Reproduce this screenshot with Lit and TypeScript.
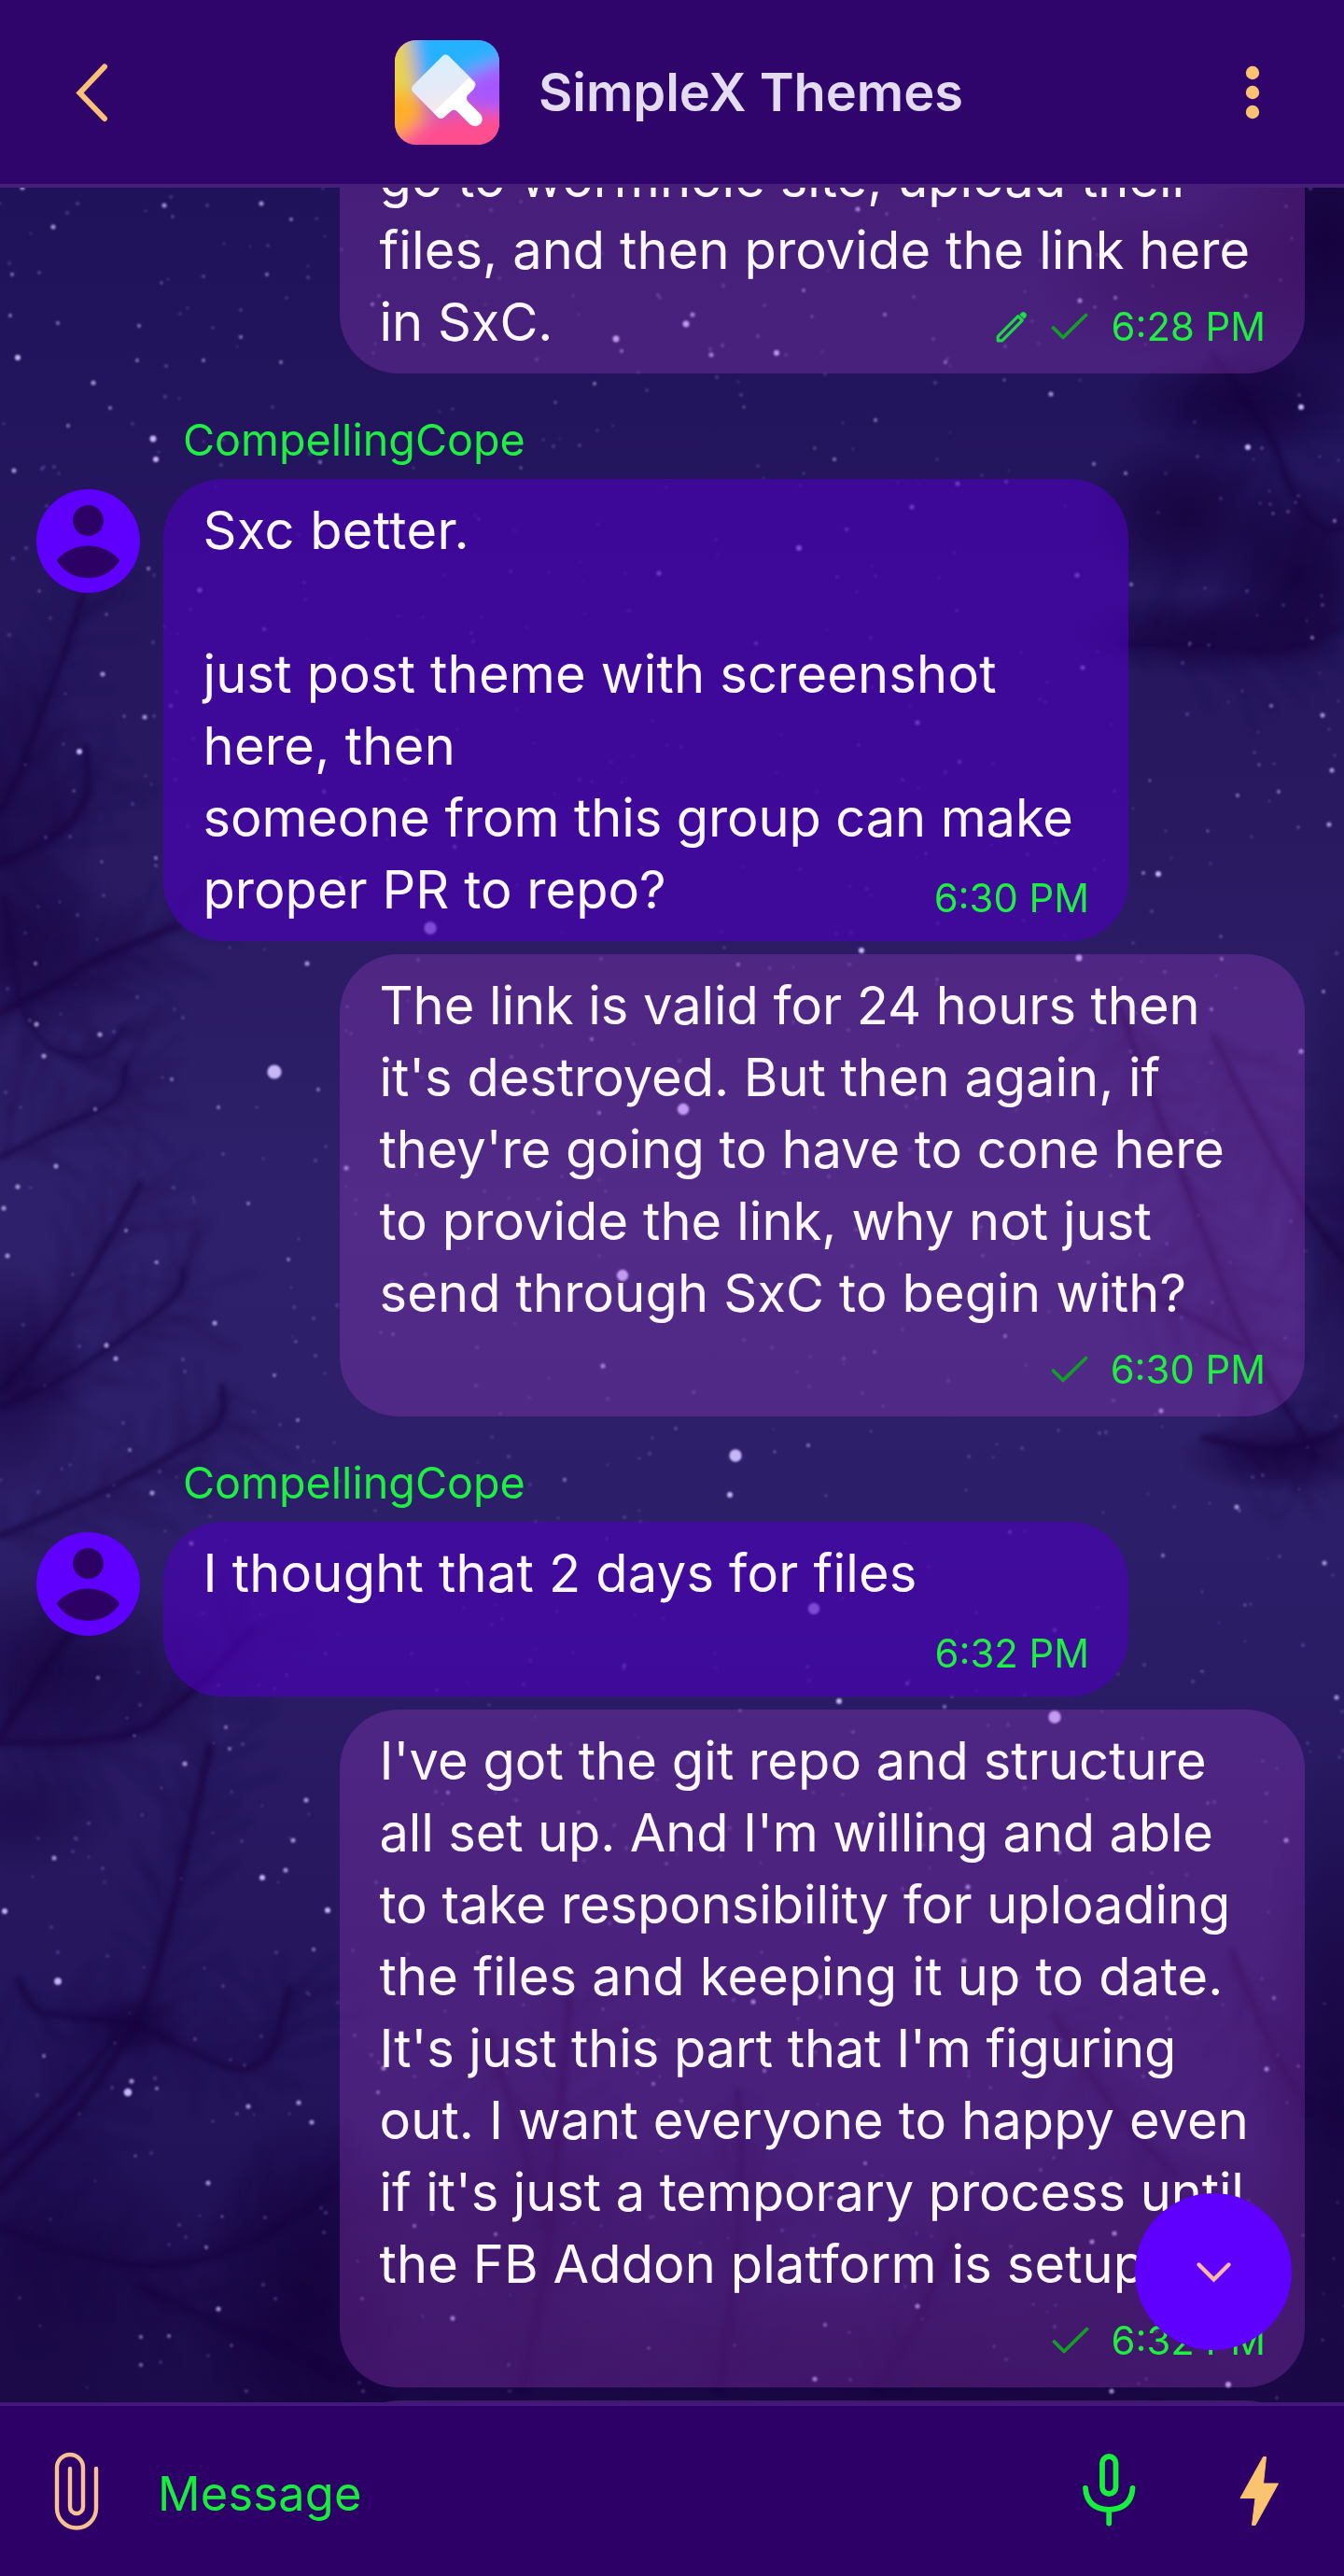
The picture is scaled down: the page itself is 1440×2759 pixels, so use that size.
import { LitElement, html, svg, css } from "lit";
import { customElement, property } from "lit/decorators.js";
import { styleMap } from "lit/directives/style-map.js";

type Point = [number, number];
type Star = [number, number, number];
/* A line of text and its tracking in pixels. */
type Line = [string, number];

interface Message {
  own: boolean;
  author?: string;
  lines: Line[];
  time: string;
  edited?: boolean;
  metaBelow?: boolean;
}

const MESSAGES: Message[] = [
  {
    own: true,
    lines: [
      ["go to wormhole site, upload their", 0.02],
      ["files, and then provide the link here", 0.1],
      ["in SxC.", 0],
    ],
    time: "6:28 PM",
    edited: true,
  },
  {
    own: false,
    author: "CompellingCope",
    lines: [
      ["Sxc better.", 0.42],
      ["", 0],
      ["just post theme with screenshot", 0.18],
      ["here, then", 0.3],
      ["someone from this group can make", -0.12],
      ["proper PR to repo?", 0.03],
    ],
    time: "6:30 PM",
  },
  {
    own: true,
    lines: [
      ["The link is valid for 24 hours then", -0.06],
      ["it's destroyed. But then again, if", -0.02],
      ["they're going to have to cone here", -0.04],
      ["to provide the link, why not just", 0.07],
      ["send through SxC to begin with?", 0.15],
    ],
    time: "6:30 PM",
    metaBelow: true,
  },
  {
    own: false,
    author: "CompellingCope",
    lines: [["I thought that 2 days for files", 0.21]],
    time: "6:32 PM",
    metaBelow: true,
  },
  {
    own: true,
    lines: [
      ["I've got the git repo and structure", 0.07],
      ["all set up. And I'm willing and able", -0.13],
      ["to take responsibility for uploading", -0.07],
      ["the files and keeping it up to date.", 0.22],
      ["It's just this part that I'm figuring", -0.1],
      ["out. I want everyone to happy even", 0.1],
      ["if it's just a temporary process until", -0.09],
      ["the FB Addon platform is setup.", 0.11],
    ],
    time: "6:32 PM",
    metaBelow: true,
  },
];

/* Bright stars of the wallpaper: x, y, size. */
const STARS: Star[] = [
  [24,201,3],[176,220,3],[280,218,3],[57,243,3],[185,232,2],[312,235,2.5],[286,294,2.5],[13,294,2.5],[11,338,2.5],[62,346,2.5],
  [149,349,2.5],[19,383,3.5],[100,410,3],[301,388,2.5],[218,386,2.5],[258,361,2.5],[147,386,2.5],[178,392,2],[218,296,2],[173,303,2],
  [42,292,2],[660,363,4],[666,376,2.5],[399,326,2.5],[637,411,2.5],[705,316,2],[919,224,3],[950,229,2],[861,311,2.5],[735,347,4],
  [742,337,3],[948,337,2.5],[832,378,3.5],[762,380,3],[774,370,2],[812,360,2],[1013,388,2.5],[1157,322,3],[1173,329,2],[1195,319,2.5],
  [870,339,2],[1076,407,2],[164,470,4],[167,492,3.5],[15,504,3],[73,456,2.5],[118,437,2.5],[343,495,2.5],[159,609,2.5],[114,658,2],
  [110,722,3],[155,768,3],[133,767,2],[85,805,3.5],[214,632,3],[326,624,2],[283,674,2.5],[706,614,3],[183,756,2.5],[347,848,2.5],
  [487,907,2.5],[365,940,2],[461,994,7],[109,923,2],[167,919,2.5],[167,927,2],[38,1032,2.5],[329,1032,3],[79,847,2],[42,633,2],
  [558,501,2],[547,612,2],[513,556,2],[595,431,2],[505,678,2],[797,436,2],[938,450,2.5],[1126,422,3],[873,480,2],[894,492,2.5],
  [1394,436,3.5],[1337,479,3.5],[1352,480,2],[1172,497,2.5],[1206,507,2.5],[1026,518,3],[1078,516,2.5],[977,543,3],[907,567,2.5],
  [856,587,3.5],[897,618,2],[1154,616,3],[1025,654,2],[810,689,2.5],[933,683,2],[1160,715,3],[1212,626,2.5],[1275,689,2],
  [1406,683,2.5],[1417,648,2],[1430,558,2.5],[1364,550,2],[1380,548,2],[983,774,3],[920,798,2],[1028,816,2.5],[1013,827,2],[967,835,2],
  [1417,766,3],[1362,756,2.5],[1326,852,2.5],[1370,848,2.5],[1427,825,3],[1349,819,2],[1424,883,3],[1391,886,2],[1294,890,2],
  [1241,936,3.5],[1225,935,2.5],[929,952,2],[992,914,2],[1308,1003,2],[923,1018,3.5],[1156,1026,4],[791,1033,2.5],[1232,836,2],
  [294,1148,8],[732,1188,6.5],[667,1366,6.5],[788,1559,7],[634,1113,2.5],[642,1192,2.5],[1394,1126,3],[1004,1049,2],[234,1186,2.5],
  [266,1289,2.5],[124,1455,3],[230,1417,3],[646,1463,3],[1244,1511,3],[1077,1431,2.5],[1166,1352,2],[913,1356,2],[548,1132,2],
  [1309,1027,2.5],[866,1548,2.5],[830,1555,2],[421,1429,2],[168,1352,2.5],[309,1349,2.5],[1418,1062,2.5],[456,1365,2],[1080,1092,2],
  [1298,1081,2.5],[371,1251,3],[937,1448,2],[724,1530,2],[782,1601,3.5],[605,1585,2.5],[1325,1614,3],[1328,1618,2],[1246,1666,2.5],
  [1419,1674,3],[1082,1641,2.5],[872,1723,6.5],[1130,1746,2.5],[669,1784,2.5],[865,1785,2],[972,1803,2.5],[468,1810,2],[899,1822,3.5],
  [1012,1828,2.5],[1130,1839,7],[793,1832,2],[1432,1818,3],[1288,1790,2],[650,1648,2],[205,1653,3],[349,1771,2],[307,1794,2],
  [480,1920,2.5],[1378,1971,3],[1135,1984,2.5],[1037,2021,3],[1033,2100,3],[914,1855,2],[1294,1931,2],[714,1996,2],[620,1941,2],
  [328,1928,3],[1334,1719,2],[5,2047,3.5],[62,2122,4.5],[58,1990,3],[198,1889,3],[314,1971,3],[281,2011,3.5],[306,2003,3],
  [351,2046,3.5],[336,2088,2.5],[137,2241,5],[141,2229,3],[168,2237,2.5],[266,2256,3],[254,2264,2],[320,2252,3],[334,2273,3],
  [47,2202,2.5],[209,2184,2],[145,2309,2],[223,2338,3],[238,2374,2],[221,2407,2.5],[234,2473,3],[151,2503,2.5],[181,2502,2.5],
  [151,2533,2.5],[248,2512,2],[242,1850,2.5],[246,1873,2.5],[144,1859,2],[105,1797,2.5],[1194,2392,3],[1170,2401,3],[1357,2216,3],
  [1391,2213,2],[927,2317,2.5],[983,2470,3],[884,2490,2.5],[873,2548,3],[1316,2554,3.5],[1191,2561,3],[1365,2140,2.5],[1253,2173,2],
  [890,2354,2.5],[1083,2406,2],[819,2218,2.5],[879,2139,2.5],[1115,2324,2],[807,2144,3],[485,2483,3],[444,2384,2.5],[531,2393,2.5],
  [411,2215,3],[405,2241,2.5],[700,2232,2.5],[695,2515,2],[388,2462,2],[114,1441,3],[8,1345,3],[4,1294,3],[60,1249,3],[19,1271,3],
  [39,1097,3],[107,1108,3],[47,1131,3],[184,1156,2.5],[167,1352,2],[135,1318,2.5],[102,1188,2.5],[163,1599,3],[139,1553,2.5],
  [294,1473,2.5],[319,1521,2.5],[319,1550,2],[341,1167,2.5],[317,1437,2],
];

/* Branch silhouettes: points along each branch, and its thickness. */
const BRANCHES: { pts: Point[]; w: number }[] = [
  { pts: [[88,640],[70,700],[45,760],[25,820],[0,870]], w: 6 },
  { pts: [[92,800],[100,850],[65,895],[0,925]], w: 7 },
  { pts: [[190,992],[110,1022],[50,1060],[0,1084]], w: 8 },
  { pts: [[5,960],[13,1010],[17,1060],[28,1095],[60,1130],[110,1135],[132,1100]], w: 4 },
  { pts: [[0,1240],[60,1208],[130,1180],[135,1140]], w: 5 },
  { pts: [[0,1490],[55,1430],[110,1340],[150,1268]], w: 6 },
  { pts: [[0,1508],[60,1482],[130,1435],[195,1385],[196,1360]], w: 5 },
  { pts: [[0,1645],[110,1600],[190,1555],[240,1525],[238,1485]], w: 6 },
  { pts: [[0,1860],[55,1775],[80,1745]], w: 8 },
  { pts: [[0,1866],[130,1870],[200,1820],[270,1745]], w: 7 },
  { pts: [[225,1870],[200,1985],[160,2140],[130,2195],[80,2265],[0,2345]], w: 8 },
  { pts: [[20,2120],[30,2150],[60,2160],[145,2165],[200,2195],[255,2220],[290,2208],[310,2130]], w: 6 },
  { pts: [[0,2310],[60,2260],[125,2180]], w: 6 },
  { pts: [[0,2385],[90,2420],[190,2430],[280,2400],[360,2340]], w: 6 },
  { pts: [[150,2450],[260,2500],[340,2530],[420,2570]], w: 8 },
  { pts: [[1200,1080],[1240,1190],[1290,1320],[1330,1430],[1410,1560]], w: 6 },
  { pts: [[1300,1110],[1350,1210],[1400,1300],[1440,1350]], w: 6 },
  { pts: [[1190,1370],[1270,1405],[1330,1440]], w: 6 },
  { pts: [[1440,1530],[1380,1560],[1290,1540]], w: 7 },
  { pts: [[1300,380],[1368,470],[1378,520],[1415,570],[1440,565]], w: 5 },
  { pts: [[1200,690],[1290,690],[1380,700],[1440,670]], w: 4 },
  { pts: [[610,2140],[600,2260],[590,2400],[560,2560]], w: 8 },
  { pts: [[525,2180],[560,2300],[590,2400]], w: 6 },
  { pts: [[790,2240],[800,2340],[770,2560]], w: 7 },
  { pts: [[1020,2400],[990,2480],[940,2560]], w: 8 },
  { pts: [[1130,2160],[1190,2260],[1260,2330]], w: 7 },
  { pts: [[1320,2090],[1350,2170],[1400,2260]], w: 7 },
];

function random(seed: number): () => number {
  let s = seed;
  return () => {
    s = (s * 1664525 + 1013904223) >>> 0;
    return s / 4294967296;
  };
}

/* Fine needles that fan out from both sides of a branch towards its tip. */
function needles(): string {
  const rnd = random(91);
  let d = "";
  for (const { pts } of BRANCHES) {
    for (let i = 1; i < pts.length; i++) {
      const [ax, ay] = pts[i - 1];
      const [bx, by] = pts[i];
      const length = Math.hypot(bx - ax, by - ay);
      const back = Math.atan2(ay - by, ax - bx) + (bx > ax ? Math.PI : 0);
      for (let t = 0; t < length; t += 4) {
        const x = ax + ((bx - ax) * t) / length;
        const y = ay + ((by - ay) * t) / length;
        const angle = back + (rnd() < 0.5 ? -1 : 1) * (0.2 + rnd() * 1.1);
        const reach = 20 + rnd() * 75;
        d += `M${x.toFixed(0)} ${y.toFixed(0)}l${(Math.cos(angle) * reach).toFixed(0)} ${(Math.sin(angle) * reach).toFixed(0)}`;
      }
    }
  }
  return d;
}

function dust(): Star[] {
  const rnd = random(7);
  return Array.from({ length: 800 }, () => [rnd() * 1440, 200 + rnd() * 2370, 1.1 + rnd() * 1] as Star);
}

const smooth = (pts: Point[]): string => {
  let d = `M${pts[0][0]} ${pts[0][1]}`;
  for (let i = 1; i < pts.length - 1; i++) {
    const [x, y] = pts[i];
    const [nx, ny] = pts[i + 1];
    d += ` Q${x} ${y} ${(x + nx) / 2} ${(y + ny) / 2}`;
  }
  const [ex, ey] = pts[pts.length - 1];
  return `${d} L${ex} ${ey}`;
};

@customElement("night-sky")
class NightSky extends LitElement {
  static styles = css`
    :host {
      display: block;
    }
    .sky {
      display: block;
      width: 1440px;
      height: 2759px;
    }
  `;

  render() {
    const shades: [number, number, number, number, number][] = [
      [1420, 260, 150, 190, 0.9],
      [1270, 300, 160, 90, 0.6],
      [1330, 430, 130, 60, 0.8],
      [1270, 550, 110, 90, 0.8],
      [1390, 620, 90, 110, 0.8],
      [1290, 680, 150, 46, 0.7],
      [0, 900, 110, 230, 0.5],
      [60, 1020, 120, 90, 0.45],
      [10, 1480, 90, 130, 0.6],
      [60, 1790, 180, 110, 0.6],
      [20, 1940, 110, 70, 0.45],
      [145, 2170, 60, 34, 0.65],
      [40, 2440, 180, 170, 0.45],
      [330, 2450, 120, 200, 0.75],
      [470, 2520, 300, 130, 0.35],
      [1440, 1300, 60, 330, 0.5],
      [1370, 1560, 110, 40, 0.7],
      [1430, 2250, 90, 380, 0.75],
      [1000, 2560, 600, 110, 0.6],
      [560, 2380, 260, 110, 0.35],
      [1200, 2420, 260, 130, 0.4],
    ];
    return html`
      <svg class="sky" viewBox="0 0 1440 2759" aria-hidden="true">
        <defs>
          <linearGradient id="air" x1="0" y1="0" x2="0" y2="1">
            <stop offset="0.07" stop-color="#20125a"></stop>
            <stop offset="0.32" stop-color="#281961"></stop>
            <stop offset="0.47" stop-color="#2f206b"></stop>
            <stop offset="0.6" stop-color="#2c1e68"></stop>
            <stop offset="0.74" stop-color="#26175f"></stop>
            <stop offset="0.84" stop-color="#221258"></stop>
            <stop offset="0.935" stop-color="#1c0b4a"></stop>
          </linearGradient>
          <radialGradient id="shade">
            <stop offset="0" stop-color="#14003a"></stop>
            <stop offset="0.5" stop-color="#14003a" stop-opacity="0.6"></stop>
            <stop offset="1" stop-color="#14003a" stop-opacity="0"></stop>
          </radialGradient>
          <filter id="soft" x="-5%" y="-5%" width="110%" height="110%"><feGaussianBlur stdDeviation="2.8"></feGaussianBlur></filter>
          <filter id="softer" x="-5%" y="-5%" width="110%" height="110%"><feGaussianBlur stdDeviation="4.5"></feGaussianBlur></filter>
          <filter id="glow" x="-5%" y="-5%" width="110%" height="110%"><feGaussianBlur stdDeviation="0.8"></feGaussianBlur></filter>
        </defs>
        <rect width="1440" height="2759" fill="url(#air)"></rect>
        ${shades.map(
          ([x, y, rx, ry, o]) => svg`<ellipse cx=${x} cy=${y} rx=${rx} ry=${ry} fill="url(#shade)" opacity=${o}></ellipse>`
        )}
        <path d=${needles()} fill="none" stroke="#15003c" stroke-width="2.2" opacity="0.4" filter="url(#softer)"></path>
        <g fill="none" stroke="#15003c" stroke-linecap="round" opacity="0.55" filter="url(#soft)">
          ${BRANCHES.map((b) => svg`<path d=${smooth(b.pts)} stroke-width=${b.w}></path>`)}
        </g>
        <g fill="#9a86e8" opacity="0.34" filter="url(#glow)">
          ${dust().map(([x, y, r]) => svg`<circle cx=${x.toFixed(0)} cy=${y.toFixed(0)} r=${r.toFixed(1)}></circle>`)}
        </g>
        <g fill="#cfc0ff" filter="url(#glow)">
          ${STARS.map(
            ([x, y, s]) =>
              svg`<circle cx=${x} cy=${y} r=${s > 5 ? s * 0.95 : s * 0.86} opacity=${s > 3.4 ? 0.95 : s > 2.9 ? 0.72 : s > 2.2 ? 0.5 : 0.36}></circle>`
          )}
        </g>
      </svg>
    `;
  }
}

@customElement("chat-bubble")
class ChatBubble extends LitElement {
  @property({ attribute: false }) message!: Message;

  static styles = css`
    :host {
      display: block;
      flex: none;
    }
    .bubble {
      box-sizing: border-box;
      display: grid;
      width: 1034px;
      padding: 17px 42px 16px 42.5px;
      border-radius: 63px;
      background: rgba(78, 0, 190, 0.6);
    }
    .own {
      background: rgba(186, 70, 225, 0.25);
    }
    .text {
      grid-area: 1 / 1;
      font: 400 56px/77px Inter, sans-serif;
      white-space: pre;
      color: #fff9ff;
    }
    .line {
      width: max-content;
      height: 77px;
    }
    .spaced {
      padding-bottom: 77px;
    }
    .meta {
      grid-area: 1 / 1;
      place-self: end;
      display: flex;
      align-items: center;
      height: 50px;
      margin-bottom: 5px;
      font: 400 41.8px/50px Inter, sans-serif;
      color: #1df03f;
    }
    .own .meta {
      margin-bottom: 9px;
    }
    .pencil {
      width: 34px;
      height: 34px;
      margin-right: 25px;
    }
    .check {
      width: 40px;
      height: 30px;
      margin-right: 24px;
    }
  `;

  render() {
    const m = this.message;
    return html`
      <div class="bubble ${m.own ? "own" : ""}">
        <div class="text ${m.metaBelow ? "spaced" : ""}">${m.lines.map(
          ([text, track]) => html`<div class="line" style=${styleMap({ letterSpacing: `${track}px` })}>${text}</div>`
        )}</div>
        <div class="meta">
          ${m.edited
            ? html`<svg class="pencil" viewBox="0 0 34 34" fill="none" stroke="#1fd844" stroke-width="3.200" stroke-linejoin="round">
                <path d="M2.200 31.800v-4.500L23.800 5.700l4.500 4.500L6.700 31.800z"></path>
                <path d="M26.300 4l1.700-1.700q1.500-1 2.800 0l1 1q1 1.300 0 2.700l-1.700 1.700z" fill="#1fe044" stroke-width="1.500"></path>
              </svg>`
            : ""}
          ${m.own
            ? html`<svg class="check" viewBox="0 0 40 30" fill="none" stroke="#139f26" stroke-width="3.800" stroke-linecap="round" stroke-linejoin="round">
                <path d="M2.500 16L13 26.500L37.500 2.500"></path>
              </svg>`
            : ""}
          <span>${m.time}</span>
        </div>
      </div>
    `;
  }
}

@customElement("app-root")
class AppRoot extends LitElement {
  static styles = css`
    :host {
      position: relative;
      display: flex;
      flex-direction: column;
      width: 1440px;
      height: 2759px;
      overflow: hidden;
      font-family: Inter, sans-serif;
    }
    .wallpaper {
      position: absolute;
      inset: 0;
      z-index: -1;
    }
    .header {
      box-sizing: border-box;
      display: flex;
      align-items: center;
      flex: none;
      height: 201px;
      border-bottom: 4px solid #462078;
      background: #30056b;
    }
    .back {
      width: 36px;
      height: 64px;
      margin-left: 80px;
    }
    .logo {
      width: 112px;
      height: 112px;
      margin: 0 42px 0 307px;
    }
    .title {
      flex: 1;
      margin: 0;
      font: 600 56px/66px Inter, sans-serif;
      letter-spacing: -0.05px;
      color: #e3dcf1;
    }
    .dots {
      width: 16px;
      height: 60px;
      margin-right: 90px;
    }
    .feed {
      flex: 1;
      min-height: 0;
      overflow: hidden;
    }
    .list {
      display: flex;
      flex-direction: column;
      gap: 14px;
      margin-top: -65px;
    }
    .sent {
      margin-left: 364px;
    }
    .received {
      display: grid;
      grid-template-columns: 111px 1034px;
      column-gap: 25px;
      padding-left: 39px;
    }
    .author {
      grid-column: 2;
      box-sizing: border-box;
      height: 99px;
      padding: 32px 0 17px 21px;
      font-size: 46.7px;
      line-height: 50px;
      color: #1df03f;
    }
    .avatar {
      width: 111px;
      height: 111px;
      margin-top: 11px;
    }
    .peek {
      width: 1034px;
      height: 180px;
      border-radius: 63px;
      background: rgba(186, 70, 225, 0.25);
    }
    .composer {
      box-sizing: border-box;
      display: flex;
      align-items: center;
      flex: none;
      height: 186px;
      border-top: 4px solid #43187a;
      background: #2c0066;
    }
    .clip {
      width: 48px;
      height: 84px;
      margin-left: 58px;
    }
    .placeholder {
      flex: 1;
      padding: 6px 0 0 63px;
      font: 400 50.5px/60px Inter, sans-serif;
      letter-spacing: 0.2px;
      color: #17ee3b;
    }
    .mic {
      width: 60px;
      height: 80px;
      margin: 0 109px 4px 0;
    }
    .bolt {
      width: 44px;
      height: 76px;
      margin-right: 69px;
    }
    .jump {
      position: absolute;
      left: 1216px;
      top: 2349px;
      width: 168px;
      height: 168px;
      z-index: 2;
    }
  `;

  private avatar() {
    return html`<svg class="avatar" viewBox="0 0 111 111">
      <circle cx="55.5" cy="55.5" r="55.5" fill="#5f00ff"></circle>
      <circle cx="55.5" cy="33.5" r="16.5" fill="#2c0064"></circle>
      <path d="M23.500 74Q37 60.500 55.500 60.500T87.500 74Q89.500 76 88 78.500Q76 95 55.500 95T23 78.500Q21.500 76 23.500 74z" fill="#2c0064"></path>
    </svg>`;
  }

  private logo() {
    return html`<svg class="logo" viewBox="0 0 112 112">
      <defs>
        <clipPath id="tile"><rect width="112" height="112" rx="23"></rect></clipPath>
        <filter id="melt" x="-30%" y="-30%" width="160%" height="160%"><feGaussianBlur stdDeviation="9"></feGaussianBlur></filter>
        <linearGradient id="bristle" x1="0.3" y1="0" x2="0.5" y2="1">
          <stop offset="0" stop-color="#d6f0fb"></stop>
          <stop offset="0.6" stop-color="#e8e9f7"></stop>
          <stop offset="1" stop-color="#fbe8e6"></stop>
        </linearGradient>
      </defs>
      <g clip-path="url(#tile)">
        <rect width="112" height="112" fill="#c85bd0"></rect>
        <g filter="url(#melt)">
          <path d="M12-30H140V22L70 46L30 60z" fill="#25b1ff"></path>
          <path d="M140 12V78L80 70L70 40z" fill="#a656ff"></path>
          <path d="M-30 140L10 100L44 84L112 78L140 72V140z" fill="#ff4e8e"></path>
          <path d="M-30-30H12L22 40L30 70L-30 100z" fill="#e9d548"></path>
          <path d="M-30 56H22L36 80L2 108H-30z" fill="#ffb026"></path>
        </g>
        <path d="M54.500 20L22.500 52L49.500 79.500L82 47.500z" fill="url(#bristle)" stroke="url(#bristle)" stroke-width="9" stroke-linejoin="round"></path>
        <path
          d="M79.300 40.500L83.800 45Q87 49 84 53L78 59Q75.500 62.500 78.500 66L92 79.500Q95.500 84.500 92 89.500Q86.500 94.500 80.500 90L67 76.500Q63.500 73 59.500 76.500L53.500 82Q49.500 85 45.500 81.500L41.500 77.500z"
          fill="#ffffff"
        ></path>
      </g>
    </svg>`;
  }

  render() {
    return html`
      <night-sky class="wallpaper"></night-sky>
      <header class="header">
        <svg class="back" viewBox="0 0 36 64" fill="none" stroke="#fbc276" stroke-width="6" stroke-linecap="round" stroke-linejoin="miter">
          <path d="M32 4.500L5.500 32.500L32 60"></path>
        </svg>
        ${this.logo()}
        <h1 class="title">SimpleX Themes</h1>
        <svg class="dots" viewBox="0 0 16 60" fill="#fbc36f">
          <circle cx="8" cy="9" r="7.200"></circle>
          <circle cx="8" cy="30" r="7.200"></circle>
          <circle cx="8" cy="51" r="7.200"></circle>
        </svg>
      </header>
      <main class="feed">
        <div class="list">
          ${MESSAGES.map((m) =>
            m.own
              ? html`<chat-bubble class="sent" .message=${m}></chat-bubble>`
              : html`<section class="received">
                  <div class="author">${m.author}</div>
                  ${this.avatar()}
                  <chat-bubble .message=${m}></chat-bubble>
                </section>`
          )}
          <div class="sent peek"></div>
        </div>
      </main>
      <footer class="composer">
        <svg class="clip" viewBox="0 0 48 84" fill="none" stroke="#f8c192" stroke-width="4.400" stroke-linecap="round">
          <path d="M45 18V60.500A21 21 0 0 1 3 60.500V17A14 14 0 0 1 31 17V59A7 7 0 0 1 17 59V18"></path>
        </svg>
        <div class="placeholder">Message</div>
        <svg class="mic" viewBox="0 0 60 80" fill="none" stroke="#17f03b" stroke-width="5.800" stroke-linecap="round">
          <rect x="23" y="5" width="14.500" height="40" rx="7.250"></rect>
          <path d="M5 39Q6.500 61 30 62Q54 61 55.500 39M30.200 63V76.500"></path>
        </svg>
        <svg class="bolt" viewBox="0 0 44 76" fill="#fac36f" stroke="#fac36f" stroke-width="1" stroke-linejoin="round">
          <path d="M26.500 1.500H29.500L26.500 30H42.500L18 74.500H14.500L18 45.500H2z"></path>
        </svg>
      </footer>
      <svg class="jump" viewBox="0 0 168 168">
        <circle cx="84" cy="84" r="84" fill="#5f00ff"></circle>
        <path d="M68.500 76.500L84.500 92.500L100.500 76.500" fill="none" stroke="#fbb9a2" stroke-width="4.400" stroke-linecap="round"></path>
      </svg>
    `;
  }
}
